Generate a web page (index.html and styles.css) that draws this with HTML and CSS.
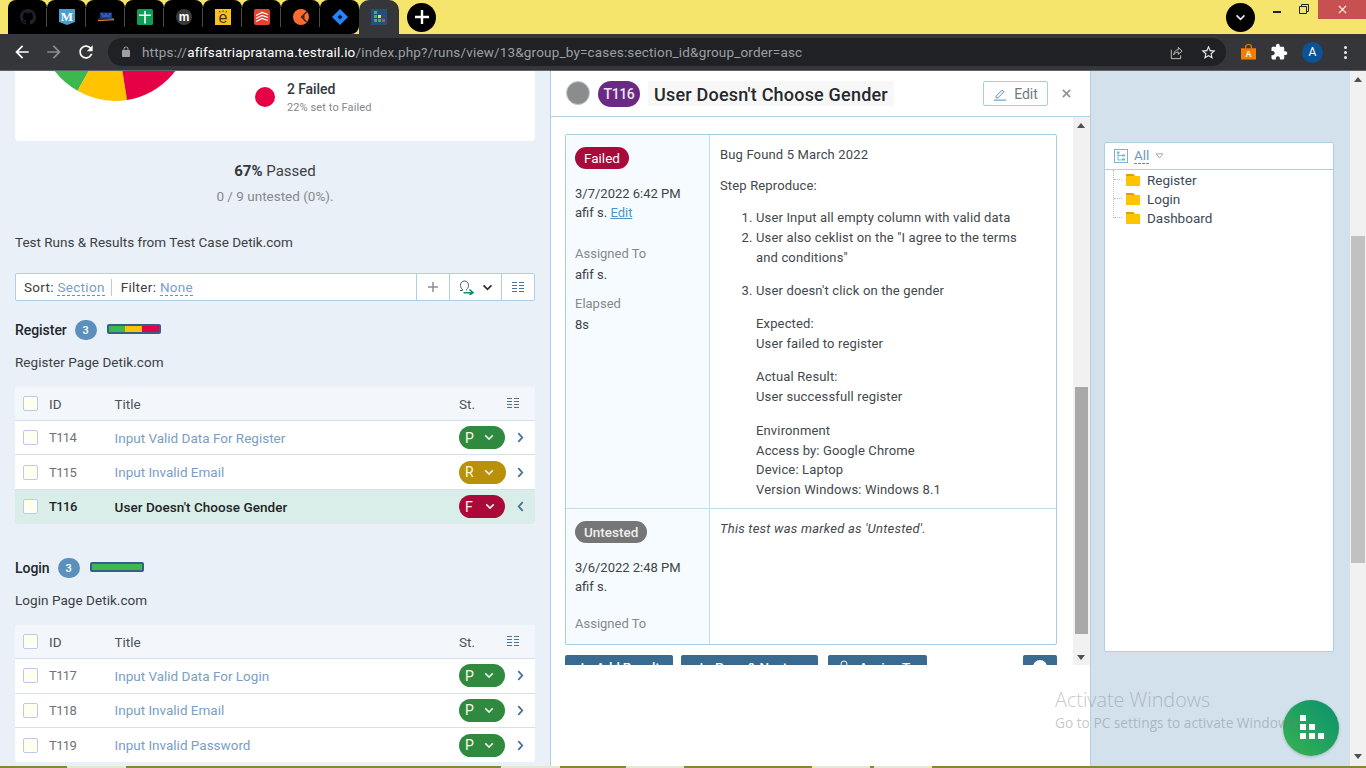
FILE: index.html
```html
<!DOCTYPE html>
<html lang="en">
<head>
<meta charset="utf-8">
<title>TestRail</title>
<link rel="stylesheet" href="styles.css">
</head>
<body>
<svg class="defs" aria-hidden="true">
  <symbol id="chev-down" viewBox="0 0 12 8"><path d="M1.5 1.5 6 6l4.500-4.500" fill="none" stroke="currentColor" stroke-width="2"/></symbol>
  <symbol id="chev-right" viewBox="0 0 8 12"><path d="M1.500 1 6 6l-4.500 5" fill="none" stroke="currentColor" stroke-width="2"/></symbol>
  <symbol id="chev-left" viewBox="0 0 8 12"><path d="M6.500 1 2 6l4.500 5" fill="none" stroke="currentColor" stroke-width="2"/></symbol>
  <symbol id="cols" viewBox="0 0 12 11"><path d="M0 .5h5M7 .5h5M0 3.500h5M7 3.500h5M0 6.500h5M7 6.500h5M0 9.500h5M7 9.500h5" fill="none" stroke="currentColor" stroke-width="1"/></symbol>
  <symbol id="folder" viewBox="0 0 14 12"><path d="M0 0h7l2 2h5v10H0z" fill="#ffc300"/><path d="M0 0h7l2 2H0z" fill="#d9a400"/></symbol>
  <symbol id="plus" viewBox="0 0 10 10"><path d="M5 0v10M0 5h10" stroke="currentColor" stroke-width="2"/></symbol>
</svg>

<header class="chrome">
  <div class="tabstrip">
    <div class="tabs">
      <div class="tab"><svg class="fav" viewBox="0 0 16 16"><path fill="#1d2329" d="M8 0C3.580 0 0 3.580 0 8c0 3.540 2.290 6.530 5.470 7.590.4.070.55-.17.55-.38 0-.19-.01-.82-.01-1.490-2.010.37-2.530-.49-2.690-.94-.09-.23-.48-.94-.82-1.130-.28-.15-.68-.52-.01-.53.63-.01 1.080.58 1.230.82.72 1.210 1.870.87 2.330.66.070-.52.28-.87.51-1.070-1.780-.2-3.640-.89-3.640-3.950 0-.87.31-1.590.82-2.150-.08-.2-.36-1.020.08-2.120 0 0 .67-.21 2.200.82.64-.18 1.320-.27 2-.27.68 0 1.360.09 2 .27 1.530-1.040 2.200-.82 2.200-.82.44 1.100.16 1.920.08 2.120.51.56.82 1.270.82 2.150 0 3.070-1.870 3.750-3.650 3.950.29.25.54.73.54 1.480 0 1.070-.01 1.930-.01 2.200 0 .21.15.46.55.38A8.013 8.013 0 0016 8c0-4.420-3.580-8-8-8z"/></svg></div>
      <div class="tab"><svg class="fav" viewBox="0 0 16 16"><path fill="#4a9fd0" d="M0 0h16v13l-8 3-8-3z"/><text class="fav-m" x="8" y="12" text-anchor="middle">M</text></svg></div>
      <div class="tab"><svg class="fav" viewBox="0 0 16 16"><path fill="#1a3a8a" d="M2 3.500h12v5.500H2z"/><path fill="#5a7fd0" d="M3 4.500h2v1H3zM7 4.500h2v1H7zM11 4.500h2v1h-2zM4 6.500h8v1H4z"/><path fill="#d9822b" d="M0 11l16-1v1.300L0 12.300z"/><path fill="#3a4a7a" d="M0 9.500l16-.5v1L0 10.500z"/></svg></div>
      <div class="tab"><svg class="fav" viewBox="0 0 16 16"><rect width="16" height="16" rx="1.500" fill="#0f9d58"/><path fill="#fff" d="M7.200 2h1.600v3.500H14V7H8.800v7.500H7.200V7H2V5.500h5.200z"/></svg></div>
      <div class="tab"><svg class="fav" viewBox="0 0 16 16"><circle cx="8" cy="8" r="8" fill="#3a3a3a"/><text class="fav-mo" x="8" y="11.500" text-anchor="middle">m</text></svg></div>
      <div class="tab"><svg class="fav" viewBox="0 0 16 16"><rect width="16" height="16" fill="#f9c21a"/><text class="fav-e" x="8" y="14" text-anchor="middle">e</text><path d="M5 3.500 4.500 2M8 3V1.500M11 3.500 11.500 2" stroke="#333" stroke-width="1"/></svg></div>
      <div class="tab"><svg class="fav" viewBox="0 0 16 16"><rect width="16" height="16" rx="2" fill="#e44332"/><path d="M2 6.500 8 3.500l6 2M2 9.500l6-3 6 2M2 12.500l6-3 6 2" fill="none" stroke="#fff" stroke-width="1.200"/></svg></div>
      <div class="tab"><svg class="fav" viewBox="0 0 16 16"><circle cx="8" cy="8" r="8" fill="#ff6a2f"/><path d="M14 2.500 8.500 8l5 5" fill="none" stroke="#222" stroke-width="1.200"/><path d="M11.500 6 9.500 8l2 2z" fill="#222"/></svg></div>
      <div class="tab tab-last"><svg class="fav" viewBox="0 0 16 16"><path fill="#2684ff" d="M8 0l8 8-8 8-8-8z"/><path fill="#0b1b36" d="M8 5.500 10.500 8 8 10.500 5.500 8z"/></svg></div>
      <div class="tab tab-active"><svg class="fav" viewBox="0 0 16 16"><rect width="16" height="16" fill="#24507a"/><path fill="#4caf50" d="M3 2h3v3H3zM3 6h3v3H3zM3 10h3v3H3zM7 10h3v3H7z"/><path fill="#e6dc4a" d="M7 6h3v3H7z"/><path fill="#e5395a" d="M11 10h3v3h-3z"/></svg></div>
    </div>
    <div class="round-btn"><svg viewBox="0 0 14 14" class="plus-icon"><path d="M7 0v14M0 7h14" stroke="#fff" stroke-width="2.400"/></svg></div>
    <div class="strip-spacer"></div>
    <div class="round-btn"><svg class="down-icon"><use href="#chev-down"/></svg></div>
    <div class="winctl">
      <span class="win-min"></span>
      <svg class="win-restore" viewBox="0 0 10 10"><path d="M.5 2.500h7v7h-7zM2.500 2.500v-2h7v7h-2" fill="none" stroke="#222" stroke-width="1"/></svg>
      <span class="win-close"><svg viewBox="0 0 10 10"><path d="M1 1l8 8M9 1l-8 8" stroke="#fff" stroke-width="1.300"/></svg></span>
    </div>
  </div>
  <div class="toolbar">
    <svg class="tb-ico tb-back" viewBox="0 0 24 24"><path fill="#fff" d="M20 11H7.830l5.590-5.590L12 4l-8 8 8 8 1.410-1.410L7.830 13H20v-2z"/></svg>
    <svg class="tb-ico tb-fwd" viewBox="0 0 24 24"><path fill="#8b8d90" d="M4 11h12.170l-5.590-5.590L12 4l8 8-8 8-1.410-1.410L16.170 13H4v-2z"/></svg>
    <svg class="tb-ico tb-reload" viewBox="0 0 24 24"><path fill="#fff" d="M17.650 6.350C16.200 4.900 14.210 4 12 4c-4.420 0-7.990 3.580-7.990 8s3.570 8 7.990 8c3.730 0 6.840-2.550 7.730-6h-2.080c-.82 2.330-3.040 4-5.650 4-3.310 0-6-2.690-6-6s2.690-6 6-6c1.660 0 3.140.69 4.220 1.780L13 11h7V4l-2.350 2.350z"/></svg>
    <div class="omnibox">
      <svg class="lock" viewBox="0 0 24 24"><path fill="#9aa0a6" d="M18 8h-1V6c0-2.760-2.240-5-5-5S7 3.240 7 6v2H6c-1.100 0-2 .9-2 2v10c0 1.100.9 2 2 2h12c1.100 0 2-.9 2-2V10c0-1.100-.9-2-2-2zm-9-2c0-1.660 1.340-3 3-3s3 1.340 3 3v2H9V6z"/></svg>
      <span class="url">https://<b>afifsatriapratama.testrail.io</b>/index.php?/runs/view/13&amp;group_by=cases:section_id&amp;group_order=asc</span>
      <svg class="omni-ico" viewBox="0 0 16 16"><path d="M3.500 5v9.500h10V11M6 10.500C6.500 7 8.500 5 11 5V2.500L15 6.500l-4 3.500V7.500c-2 0-3.800 1-5 3z" fill="none" stroke="#c4c7c5" stroke-width="1"/></svg>
      <svg class="omni-ico omni-star" viewBox="0 0 24 24"><path fill="#e8eaed" d="M22 9.240l-7.190-.62L12 2 9.190 8.630 2 9.240l5.460 4.730L5.820 21 12 17.270 18.180 21l-1.630-7.030L22 9.240zM12 15.400l-3.760 2.270 1-4.280-3.320-2.880 4.380-.38L12 6.100l1.710 4.040 4.380.38-3.320 2.880 1 4.280L12 15.400z"/></svg>
    </div>
    <div class="ext-bag"><svg viewBox="0 0 16 16"><path fill="#f57c00" d="M0 4h16v12H0z"/><path d="M5 4V2a3 2 0 0 1 6 0v2" fill="none" stroke="#f57c00" stroke-width="1.300"/><text class="bag-a" x="8" y="13" text-anchor="middle">A</text></svg></div>
    <svg class="puzzle" viewBox="0 0 24 24"><path fill="#fff" d="M20.500 11H19V7c0-1.100-.9-2-2-2h-4V3.500C13 2.120 11.880 1 10.500 1S8 2.120 8 3.500V5H4c-1.100 0-1.990.9-1.990 2v3.800H3.500c1.490 0 2.700 1.210 2.700 2.700s-1.210 2.700-2.700 2.700H2V20c0 1.100.9 2 2 2h3.800v-1.500c0-1.490 1.210-2.700 2.700-2.700 1.490 0 2.700 1.210 2.700 2.700V22H17c1.100 0 2-.9 2-2v-4h1.500c1.380 0 2.500-1.120 2.500-2.500S21.880 11 20.500 11z"/></svg>
    <div class="avatar">A</div>
    <div class="dots"><i></i><i></i><i></i></div>
  </div>
</header>

<main class="app">
  <section class="runs">
    <div class="chart-card">
      <svg class="pie" viewBox="38 71 155 30">
        <path fill="#3cb84f" d="M115 24 77.600 90.700A76.500 76.500 0 0 1 38.500 24z"/>
        <path fill="#ffc300" d="M115 24 127 100A76.500 76.500 0 0 1 77.600 90.700z"/>
        <path fill="#e60045" d="M115 24 191 25A76.500 76.500 0 0 1 127 100z"/>
      </svg>
      <div class="legend">
        <span class="legend-dot"></span>
        <div>
          <div class="legend-title">2 Failed</div>
          <div class="legend-sub">22% set to Failed</div>
        </div>
      </div>
    </div>
    <div class="passed"><b>67%</b> Passed</div>
    <div class="untested">0 / 9 untested (0%).</div>
    <div class="run-desc">Test Runs &amp; Results from Test Case Detik.com</div>

    <div class="filterbar">
      <div class="filter-main">
        <span>Sort: <a class="dashed">Section</a></span>
        <span class="filter-sep"></span>
        <span>Filter: <a class="dashed">None</a></span>
      </div>
      <div class="filter-cell cell-plus"><svg viewBox="0 0 10 10"><path d="M5 0v10M0 5h10" stroke="#8a8f94" stroke-width="1.500"/></svg></div>
      <div class="filter-cell cell-assign">
        <svg class="assign-ico" viewBox="0 0 15 15"><path d="M1 10.500h2.500V9.500C2.200 8.500 1.500 7 1.500 5.500 1.500 3 3 1 5.500 1s4 2 4 4.500c0 1.500-.7 3-2 4v1" fill="none" stroke="#3c5a73" stroke-width="1"/><path d="M4.500 12.700h9M10.500 9.500l3.500 3.200-3.500 2.300" fill="none" stroke="#0e8f6b" stroke-width="1.600"/></svg>
        <svg class="assign-chev"><use href="#chev-down"/></svg>
      </div>
      <div class="filter-cell cell-cols"><svg class="cols-ico"><use href="#cols"/></svg></div>
    </div>

    <div class="group-head">
      <h2>Register</h2><span class="count">3</span>
      <span class="statbar"><i class="seg-g seg-third"></i><i class="seg-y seg-third"></i><i class="seg-r seg-third"></i></span>
    </div>
    <div class="group-desc">Register Page Detik.com</div>
    <div class="table">
      <div class="row row-head">
        <span class="cb"></span><span class="c-id">ID</span><span class="c-title">Title</span><span class="c-st">St.</span><svg class="cols-ico"><use href="#cols"/></svg>
      </div>
      <div class="row">
        <span class="cb"></span><span class="c-id">T114</span><a class="c-title">Input Valid Data For Register</a>
        <span class="c-status"><span class="pill pill-p">P<svg><use href="#chev-down"/></svg></span></span><svg class="row-chev"><use href="#chev-right"/></svg>
      </div>
      <div class="row">
        <span class="cb"></span><span class="c-id">T115</span><a class="c-title">Input Invalid Email</a>
        <span class="c-status"><span class="pill pill-r">R<svg><use href="#chev-down"/></svg></span></span><svg class="row-chev"><use href="#chev-right"/></svg>
      </div>
      <div class="row row-selected">
        <span class="cb"></span><span class="c-id">T116</span><a class="c-title">User Doesn't Choose Gender</a>
        <span class="c-status"><span class="pill pill-f">F<svg><use href="#chev-down"/></svg></span></span><svg class="row-chev"><use href="#chev-left"/></svg>
      </div>
    </div>

    <div class="group-head group-next">
      <h2>Login</h2><span class="count">3</span>
      <span class="statbar"><i class="seg-g seg-full"></i></span>
    </div>
    <div class="group-desc">Login Page Detik.com</div>
    <div class="table">
      <div class="row row-head">
        <span class="cb"></span><span class="c-id">ID</span><span class="c-title">Title</span><span class="c-st">St.</span><svg class="cols-ico"><use href="#cols"/></svg>
      </div>
      <div class="row">
        <span class="cb"></span><span class="c-id">T117</span><a class="c-title">Input Valid Data For Login</a>
        <span class="c-status"><span class="pill pill-p">P<svg><use href="#chev-down"/></svg></span></span><svg class="row-chev"><use href="#chev-right"/></svg>
      </div>
      <div class="row">
        <span class="cb"></span><span class="c-id">T118</span><a class="c-title">Input Invalid Email</a>
        <span class="c-status"><span class="pill pill-p">P<svg><use href="#chev-down"/></svg></span></span><svg class="row-chev"><use href="#chev-right"/></svg>
      </div>
      <div class="row">
        <span class="cb"></span><span class="c-id">T119</span><a class="c-title">Input Invalid Password</a>
        <span class="c-status"><span class="pill pill-p">P<svg><use href="#chev-down"/></svg></span></span><svg class="row-chev"><use href="#chev-right"/></svg>
      </div>
    </div>
  </section>

  <section class="detail">
    <div class="detail-head">
      <span class="status-circle"></span>
      <span class="case-id">T116</span>
      <span class="case-title">User Doesn't Choose Gender</span>
      <span class="head-spacer"></span>
      <button class="edit-btn"><svg viewBox="0 0 16 16"><path d="M3.500 10.500 10.500 3.500l2 2-7 7H3.500z" fill="none" stroke="#3c7fb0" stroke-width="1"/><path d="M1 15h14" stroke="#5a9fd0" stroke-width="1.300"/></svg>Edit</button>
      <svg class="close-x" viewBox="0 0 10 10"><path d="M1 1l8 8M9 1l-8 8" stroke="#8d9499" stroke-width="1.800"/></svg>
    </div>
    <div class="detail-body">
      <div class="detail-content">
        <div class="results">
          <div class="result result-first">
            <div class="result-meta">
              <span class="badge badge-failed">Failed</span>
              <div class="meta-date">3/7/2022 6:42 PM</div>
              <div>afif s. <a class="link">Edit</a></div>
              <div class="meta-label">Assigned To</div>
              <div class="meta-val">afif s.</div>
              <div class="meta-label meta-label-tight">Elapsed</div>
              <div class="meta-val">8s</div>
            </div>
            <div class="result-text">
              <p>Bug Found 5 March 2022</p>
              <p class="p-step">Step Reproduce:</p>
              <ol class="steps">
                <li>User Input all empty column with valid data</li>
                <li>User also ceklist on the "I agree to the terms and conditions"</li>
              </ol>
              <ol class="steps steps-3" start="3">
                <li>User doesn't click on the gender</li>
              </ol>
              <p class="indent p-gap">Expected:<br>User failed to register</p>
              <p class="indent p-gap">Actual Result:<br>User successfull register</p>
              <p class="indent p-gap-env">Environment<br>Access by: Google Chrome<br>Device: Laptop<br>Version Windows: Windows 8.1</p>
            </div>
          </div>
          <div class="result result-second">
            <div class="result-meta">
              <span class="badge badge-untested">Untested</span>
              <div class="meta-date">3/6/2022 2:48 PM</div>
              <div>afif s.</div>
              <div class="meta-label meta-label-second">Assigned To</div>
            </div>
            <div class="result-text"><p class="marked">This test was marked as 'Untested'.</p></div>
          </div>
        </div>
        <div class="actions">
          <button class="act act-add"><svg class="act-ico"><use href="#plus"/></svg>Add Result</button>
          <button class="act act-pass"><svg class="act-ico"><use href="#plus"/></svg>Pass &amp; Next</button>
          <button class="act act-assign"><svg class="act-user" viewBox="0 0 10 14"><circle cx="5" cy="4" r="3" fill="none" stroke="#fff"/><path d="M.5 13c0-3 2-4.500 4.500-4.500s4.500 1.500 4.500 4.500" fill="none" stroke="#fff"/></svg>Assign To</button>
          <button class="act act-more"><span class="more-circle"></span></button>
        </div>
      </div>
      <div class="scrollbar scrollbar-inner">
        <span class="arrow-up"></span>
        <span class="thumb thumb-inner"></span>
        <span class="arrow-down"></span>
      </div>
    </div>
  </section>

  <aside class="side">
    <div class="tree-box">
      <div class="tree-head">
        <svg class="tree-ico" viewBox="0 0 14 14"><rect x=".5" y=".5" width="13" height="13" fill="none" stroke="#7fb0d0"/><path d="M4 3v8h3M4 6.500h3" fill="none" stroke="#7fb0d0"/><path d="M3 2.500h2.500v2H3zM7.500 5.500H11v2H7.500zM7.500 9.500H11v2H7.500z" fill="#7fb0d0"/></svg>
        <a class="all-link">All</a>
        <svg class="tri" viewBox="0 0 10 7"><path d="M1 1h8L5 6z" fill="none" stroke="#9aa0a6"/></svg>
      </div>
      <ul class="tree">
        <li><svg><use href="#folder"/></svg>Register</li>
        <li><svg><use href="#folder"/></svg>Login</li>
        <li><svg><use href="#folder"/></svg>Dashboard</li>
      </ul>
    </div>
  </aside>

  <div class="scrollbar scrollbar-page">
    <span class="arrow-up"></span>
    <span class="thumb thumb-page"></span>
    <span class="arrow-down"></span>
  </div>

  <div class="fab"><i class="s1"></i><i class="s2"></i><i class="s3"></i><i class="s4"></i><i class="s5"></i><i class="s6"></i></div>
  <div class="activate">
    <div class="activate-title">Activate Windows</div>
    <div class="activate-sub">Go to PC settings to activate Windows.</div>
  </div>
</main>
<div class="taskbar"></div>
</body>
</html>
```

FILE: styles.css
```css
* { box-sizing: border-box; }
html, body { margin: 0; height: 100%; }
body {
  width: 1366px; height: 768px; overflow: hidden;
  display: flex; flex-direction: column;
  font-family: Roboto, "Liberation Sans", sans-serif;
  font-size: 13px; color: #3c4043;
  background: #e9f0f7;
}
.defs { width: 0; height: 0; position: absolute; }
svg { display: block; flex: none; }

/* browser chrome */
.chrome { flex: none; height: 71px; border-bottom: 1px solid #60646a; background: #35363a; }
.tabstrip { height: 34px; display: flex; align-items: center; background: #f6e56d; }
.tabs { display: flex; height: 34px; margin-left: 8px; align-self: flex-end; }
.tab {
  width: 39px; height: 34px; background: #000; position: relative;
  border-radius: 8px 8px 0 0; display: flex; align-items: center; justify-content: center;
}
.tab::after { content: ""; position: absolute; right: 0; top: 8px; height: 19px; width: 1px; background: #4a4a4a; }
.tab-last { border-radius: 8px 8px 8px 0; }
.tab-last::after, .tab-active::after { display: none; }
.tab-active { background: #35363a; width: 40px; border-radius: 10px 10px 0 0; }
.fav { width: 16px; height: 16px; }
.fav-m { font: bold 13px "Liberation Serif", serif; fill: #fff; }
.fav-mo { font: bold 12px "Liberation Sans", sans-serif; fill: #fff; }
.fav-e { font: 16px "Liberation Sans", sans-serif; fill: #333; }
.bag-a { font: bold 9px "Liberation Sans", sans-serif; fill: #fff; }
.round-btn {
  width: 29px; height: 29px; border-radius: 50%; background: #000; margin-left: 8px;
  display: flex; align-items: center; justify-content: center; color: #e8e8e8;
}
.plus-icon { width: 14px; height: 14px; }
.down-icon { width: 11px; height: 7px; }
.strip-spacer { flex: 1; }
.winctl { display: flex; align-items: flex-start; align-self: flex-start; margin-left: 18px; height: 19px; }
.win-min { width: 8px; height: 2px; background: #222; margin: 11px 18px 0 0; }
.win-restore { width: 10px; height: 10px; margin: 4px 9px 0 0; }
.win-close { width: 48px; height: 19px; background: #c75050; display: flex; align-items: center; justify-content: center; }
.win-close svg { width: 9px; height: 9px; }

.toolbar { height: 36px; display: flex; align-items: center; padding-left: 12px; }
.tb-ico { width: 20px; height: 20px; }
.tb-fwd { margin-left: 12px; }
.tb-reload { margin-left: 12px; }
.omnibox {
  margin-left: 12px; width: 1118px; height: 28px; border-radius: 14px; background: #202124;
  display: flex; align-items: center; padding-left: 12px;
}
.lock { width: 12px; height: 12px; }
.url { margin-left: 10px; font-size: 13.5px; letter-spacing: .17px; color: #9aa0a6; white-space: nowrap; flex: 1; }
.url b { color: #fff; font-weight: 400; }
.omni-ico { width: 15px; height: 15px; margin-right: 17px; }
.omni-star { width: 17px; height: 17px; margin-right: 9px; }
.ext-bag { width: 15px; height: 18px; margin-left: 15px; }
.ext-bag svg { width: 15px; height: 18px; }
.puzzle { width: 18px; height: 18px; margin-left: 14px; }
.avatar {
  width: 21px; height: 21px; margin-left: 14px; border-radius: 50%; background: #0b5394; color: #fff;
  font-size: 12px; display: flex; align-items: center; justify-content: center;
}
.dots { margin-left: 21px; display: flex; flex-direction: column; gap: 2px; }
.dots i { width: 3px; height: 3px; border-radius: 50%; background: #e8eaed; display: block; }

/* app */
.app { flex: none; height: 695px; display: flex; position: relative; overflow: hidden; }
a { color: #6b9ac4; }

.runs { flex: none; width: 550px; padding: 0 15px; background: #e9f0f7; }
.chart-card {
  height: 70px; background: #fff; border-radius: 0 0 4px 4px; display: flex; align-items: flex-start;
  padding-left: 23px;
}
.pie { width: 155px; height: 30px; }
.legend { display: flex; align-items: center; margin: 8px 0 0 62px; }
.legend-dot { width: 20px; height: 20px; border-radius: 50%; background: #e60045; margin: 0 12px 2px 0; }
.legend-title { font-size: 14px; line-height: 20px; font-weight: 500; color: #34383c; letter-spacing: -.1px; }
.legend-sub { font-size: 11px; line-height: 18px; color: #83878b; letter-spacing: .1px; }
.passed { margin-top: 20px; line-height: 20px; text-align: center; font-size: 15px; color: #3c4043; }
.passed b { font-weight: 700; color: #33373b; }
.untested { margin-top: 5px; line-height: 20px; text-align: center; color: #85898d; font-size: 13.500px; }
.run-desc { margin-top: 26px; line-height: 20px; font-size: 13.500px; color: #3c4043; }

.filterbar {
  margin-top: 21px; height: 28px; display: flex; background: #fff;
  border: 1px solid #b0cfe3; border-radius: 2px; font-size: 13.500px; color: #3c4043;
}
.filter-main { flex: 1; display: flex; align-items: center; padding-left: 8px; letter-spacing: .3px; }
.dashed { color: #7b9ec4; border-bottom: 1px dashed #6b8fb8; line-height: 15px; display: inline-block; }
.filter-sep { width: 1px; height: 17px; background: #b0cfe3; margin: 0 9px 0 6px; }
.filter-cell { border-left: 1px solid #b0cfe3; display: flex; align-items: center; justify-content: center; }
.cell-plus { width: 33px; }
.cell-plus svg { width: 10px; height: 10px; }
.cell-assign { width: 52px; padding-left: 9px; justify-content: flex-start; }
.assign-ico { width: 15px; height: 15px; }
.assign-chev { width: 11px; height: 7px; margin-left: 8px; color: #2b2f33; }
.cell-cols { width: 33px; }
.cols-ico { width: 12px; height: 11px; color: #4b7496; }

.group-head { margin-top: 19px; height: 20px; display: flex; align-items: center; }
.group-head h2 { margin: 0; font-size: 14px; font-weight: 500; letter-spacing: -.05px; color: #22262a; }
.group-next { margin-top: 34px; }
.count {
  width: 22px; height: 20px; margin-left: 8px; border-radius: 10px; background: #5a90bb; color: #fff;
  font-size: 11px; font-weight: 500; display: flex; align-items: center; justify-content: center;
}
.statbar {
  width: 54px; height: 10px; margin: -2px 0 0 10px; display: flex; padding: 2px;
  background: #33608a; border-radius: 2px;
}
.statbar i { display: block; height: 6px; }
.seg-third { flex: 1; }
.seg-full { flex: 1; }
.seg-g { background: #3cb84f; }
.seg-y { background: #ffc300; }
.seg-r { background: #e60045; }
.group-desc { margin-top: 12px; line-height: 20px; font-size: 13.500px; letter-spacing: .05px; color: #3c4043; }

.table { margin-top: 15px; background: #fff; border-radius: 3px; overflow: hidden; }
.row {
  display: flex; align-items: center; height: 34.400px; padding: 0 11px 0 8px;
  border-bottom: 1px solid #d5e1ea; font-size: 13.500px;
}
.row:last-child { border-bottom: 0; }
.row-head { height: 34px; background: #f3f7fc; padding-right: 16px; }
.row-selected { background: #d9eee8; border-bottom: 1px solid #fff; }
.row-selected .c-id, .row-selected .c-title { color: #1f2327; font-weight: 500; }
.row-selected .c-title { letter-spacing: .05px; }
.cb { flex: none; width: 15px; height: 15px; margin-right: 12px; background: #fffff0; border: 1px solid #bcc9ee; border-radius: 2px; }
.c-id { flex: none; width: 64.500px; color: #6d7378; font-size: 13px; letter-spacing: -.6px; margin-left: -1px; margin-right: 1px; }
.row-head .c-id { font-size: 13.500px; letter-spacing: 0; }
.row-head .c-id, .row-head .c-title, .c-st { color: #4d5358; }
.c-title { flex: 1; color: #7b9ec4; white-space: nowrap; }
.c-st { flex: none; width: 48px; }
.c-status { flex: none; width: 55px; }
.pill {
  width: 46px; height: 23px; border-radius: 12px; color: #fffbe0; font-size: 14px;
  display: flex; align-items: center; padding-left: 6px;
}
.pill svg { width: 10px; height: 7px; margin-left: 10px; color: #e8f0e8; }
.pill-p { background: #2f8a3f; }
.pill-r { background: #b8900a; width: 47px; }
.pill-f { background: #a90a3a; }
.pill-f svg { margin-left: 12px; }
.row-chev { width: 7px; height: 11px; margin-left: 3px; color: #42709a; }

/* detail panel */
.detail { flex: none; width: 540px; background: #fff; border-left: 1px solid #b0cfe3; display: flex; flex-direction: column; height: 695px; }
.detail-head {
  flex: none; height: 46px; border-bottom: 1px solid #b5d2e4; display: flex; align-items: flex-start;
  padding: 10px 16px 0 15px;
}
.status-circle { width: 24px; height: 24px; border-radius: 50%; background: #8c8c8c; border: 1px solid #b8cdda; }
.case-id {
  margin-left: 8px; width: 42px; height: 26px; border-radius: 13px; background: #6a2a83; color: #efe6f2;
  font-size: 14px; font-weight: 500; letter-spacing: -.4px; display: flex; align-items: center; justify-content: center;
}
.case-title {
  margin-left: 8px; width: 246px; height: 25px; background: #f7f7f7; padding-left: 6px;
  font-size: 18px; font-weight: 500; line-height: 27px; letter-spacing: .2px; color: #25292d; white-space: nowrap;
}
.head-spacer { flex: 1; }
.edit-btn {
  width: 65px; height: 25px; background: #fff; border: 1px solid #a8cde0; border-radius: 2px;
  font: 14px Roboto, sans-serif; color: #74797d; display: flex; align-items: center; justify-content: center; gap: 7px; padding: 0;
}
.edit-btn svg { width: 14px; height: 14px; }
.close-x { width: 9px; height: 9px; margin: 8px 3px 0 14px; }

.detail-body { flex: none; height: 548px; display: flex; }
.detail-content { flex: none; width: 522px; padding: 17px 16px 0 14px; overflow: hidden; }
.results { height: 511px; border: 1px solid #a8cde0; border-radius: 2px; overflow: hidden; font-size: 13px; letter-spacing: -.1px; }
.result { display: flex; }
.result-first { height: 374px; border-bottom: 1px solid #c5dcea; }
.result-second { height: 136px; }
.result-meta {
  flex: none; width: 144px; background: #f5fbff; border-right: 1px solid #c5dcea;
  padding: 12px 0 0 9px; line-height: 20px; color: #3f4448; letter-spacing: 0;
}
.badge {
  display: block; height: 22px; line-height: 22px; border-radius: 11px; color: #fff;
  padding: 0 9px; font-size: 13.500px; font-weight: 500;
}
.badge-failed { background: #a90a3a; width: 54px; font-weight: 400; }
.badge-untested { background: #767676; width: 72px; color: #eee; }
.meta-date { margin: 15px 0 -1px; }
.meta-label { margin-top: 21px; color: #85898d; }
.meta-label-tight { margin-top: 9px; }
.meta-label-second { margin-top: 17px; }
.meta-val { margin-top: 1px; }
.link { color: #4f95c8; text-decoration: underline; }
.result-text { flex: 1; padding: 10px 0 0 10px; line-height: 20px; color: #43484c; letter-spacing: .15px; }
.result-text p { margin: 0; }
.p-step { margin-top: 11px !important; }
.steps { margin: 12px 0 0; padding-left: 36px; width: 318px; }
.steps-3 { margin-top: 13px; }
.indent { padding-left: 36px; }
.p-gap { margin-top: 13px !important; }
.p-gap-env { margin-top: 14px !important; line-height: 19.600px; }
.marked { font-style: italic; letter-spacing: .22px; }
.actions { display: flex; margin-top: 10px; }
.act {
  height: 24px; border: 0; border-radius: 2px 2px 0 0; background: #3a6a8f; color: #fff; padding: 0; margin: 0;
  font: 500 13.500px Roboto, sans-serif; flex: none; display: flex; align-items: center;
}
.act-ico { width: 9px; height: 9px; color: #fff; margin-right: 9px; }
.act-user { width: 10px; height: 14px; margin-right: 10px; }
.act-add { width: 108px; padding-left: 13px; letter-spacing: -.2px; }
.act-pass { width: 137px; margin-left: 8px; padding-left: 16px; letter-spacing: -.1px; }
.act-assign { width: 99px; margin-left: 10px; padding-left: 11px; letter-spacing: -.2px; }
.act-more { width: 34px; margin-left: 96px; padding-left: 10px; }
.more-circle { width: 14px; height: 14px; border-radius: 50%; background: #fff; }

.scrollbar { flex: none; background: #f1f1f1; display: flex; flex-direction: column; align-items: center; }
.scrollbar-inner { width: 17px; height: 548px; padding: 6px 1px 5px 0; }
.scrollbar-page { width: 16px; height: 695px; padding: 6px 0 7px; }
.arrow-up { width: 0; height: 0; border: 4px solid transparent; border-top: 0; border-bottom: 5px solid #505050; }
.arrow-down { width: 0; height: 0; border: 4px solid transparent; border-bottom: 0; border-top: 5px solid #505050; margin-top: auto; }
.thumb { display: block; }
.thumb-inner { width: 13px; height: 247px; margin-top: 259px; background: #a8a8a8; }
.thumb-page { width: 14px; height: 327px; margin-top: 154px; background: #c1c1c1; }

/* sidebar */
.side { flex: none; width: 260px; background: #d2e1ec; border-left: 1px solid #b0cfe3; padding: 71px 16px 0 13px; }
.tree-box { height: 510px; background: #fff; border: 1px solid #b0cfe3; border-radius: 2px; }
.tree-head { height: 27px; border-bottom: 1px solid #b0cfe3; display: flex; align-items: center; padding-left: 9px; font-size: 13.500px; }
.tree-ico { width: 14px; height: 14px; }
.all-link { margin-left: 6px; color: #6b9ac4; border-bottom: 1px dashed #4f8fc0; line-height: 15px; }
.tri { width: 9px; height: 6px; margin-left: 6px; }
.tree { list-style: none; margin: 0; padding: 0 0 0 21px; font-size: 13.500px; color: #3d4a57; position: relative; }
.tree li { height: 19px; display: flex; align-items: center; position: relative; }
.tree li svg { width: 14px; height: 12px; margin-right: 7px; }
.tree li::before { content: ""; position: absolute; left: -12px; top: 9px; width: 8px; border-top: 1px dotted #b5c3cf; }
.tree::before { content: ""; position: absolute; left: 8px; top: 0; height: 48px; border-left: 1px dotted #b5c3cf; }

/* overlays */
.activate { position: absolute; left: 1055px; top: 616px; font-family: "Open Sans", sans-serif; color: rgba(120, 120, 120, .42); white-space: nowrap; pointer-events: none; }
.activate-title { font-size: 19.800px; line-height: 25px; font-weight: 300; }
.activate-sub { font-size: 13.700px; line-height: 20px; margin-top: 1px; }
.fab {
  position: absolute; left: 1283px; top: 629px; width: 56px; height: 56px; border-radius: 50%;
  background: linear-gradient(225deg, #0a9170, #38b34f); box-shadow: 0 1px 3px rgba(0, 0, 0, .2);
}
.fab i { position: absolute; width: 6px; height: 6px; background: #fff; }
.s1 { left: 17px; top: 15px; }
.s2 { left: 17px; top: 24px; }
.s3 { left: 26px; top: 24px; }
.s4 { left: 17px; top: 33px; }
.s5 { left: 26px; top: 33px; }
.s6 { left: 35px; top: 33px; }

.taskbar {
  flex: none; height: 2px;
  background: linear-gradient(90deg, #8a8438 67px, #e8e8d0 67px, #e8e8d0 126px, #8a8438 126px, #8a8438 501px, #e8e8d0 501px, #e8e8d0 560px, #8a8438 560px, #8a8438 626px, #e8e8d0 626px, #e8e8d0 684px, #8a8438 684px, #8a8438 812px, #e8e8d0 812px, #e8e8d0 870px, #8a8438 870px, #8a8438 874px, #e8e8d0 874px, #e8e8d0 932px, #8a8438 932px);
}
```
